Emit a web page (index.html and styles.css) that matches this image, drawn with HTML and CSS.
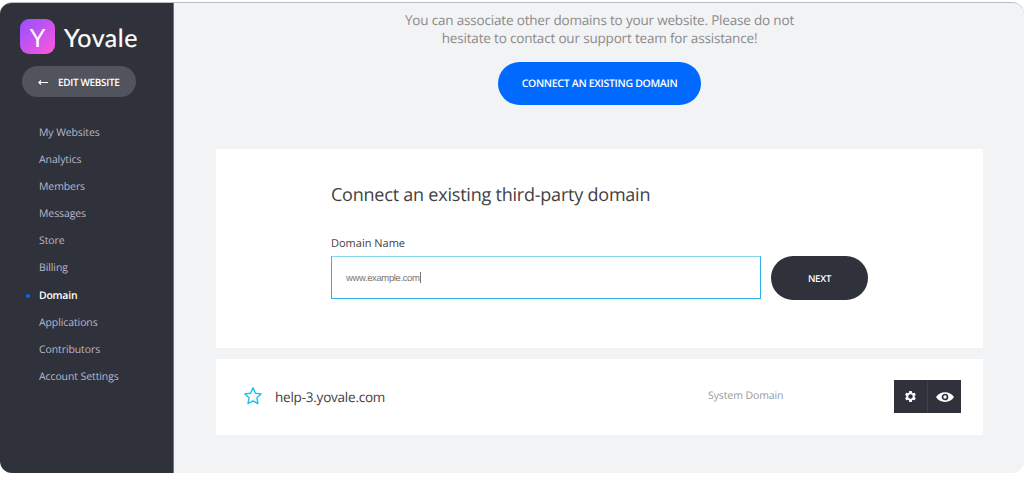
FILE: index.html
```html
<!DOCTYPE html>
<html lang="en">
<head>
<meta charset="utf-8">
<title>Yovale – Domain</title>
<link rel="stylesheet" href="styles.css">
</head>
<body>
<div class="app">
  <aside class="sidebar">
    <div class="brand"><span class="brand-mark">Y</span><span class="brand-name">Yovale</span></div>
    <a class="edit-button"><svg class="arrow" viewBox="0 0 10 8"><path d="M.5 4.500H10M3 2.500 .8 4.500l2.200 2"/></svg><span>EDIT WEBSITE</span></a>
    <nav class="menu">
      <a class="menu-item">My Websites</a>
      <a class="menu-item">Analytics</a>
      <a class="menu-item">Members</a>
      <a class="menu-item">Messages</a>
      <a class="menu-item">Store</a>
      <a class="menu-item">Billing</a>
      <a class="menu-item active">Domain</a>
      <a class="menu-item">Applications</a>
      <a class="menu-item">Contributors</a>
      <a class="menu-item">Account Settings</a>
    </nav>
  </aside>
  <main class="content">
    <p class="intro">You can associate other domains to your website. Please do not<br>hesitate to contact our support team for assistance!</p>
    <a class="connect-button">CONNECT AN EXISTING DOMAIN</a>
    <section class="card form-card">
      <h2 class="title">Connect an existing third-party domain</h2>
      <div class="label">Domain Name</div>
      <div class="form-row">
        <div class="field"><span class="field-text">www.example.com</span><span class="caret"></span></div>
        <a class="next-button">NEXT</a>
      </div>
    </section>
    <section class="card domain-card">
      <svg class="star" viewBox="0 0 20 20"><path d="M10 1.900 12.400 7.200 18.100 7.900 13.900 11.800 15 17.600 10 14.800 5 17.600 6.100 11.800 1.900 7.900 7.600 7.200Z"/></svg>
      <span class="domain">help-3.yovale.com</span>
      <span class="kind">System Domain</span>
      <div class="actions">
        <span class="action"><svg class="gear" viewBox="0 0 24 24"><path fill-rule="evenodd" d="M19.4 13a7.500 7.500 0 0 0 0-2l2.100-1.600a.5.5 0 0 0 .1-.7l-2-3.400a.5.5 0 0 0-.6-.2l-2.500 1a7.300 7.300 0 0 0-1.700-1L14.400 2.400a.5.5 0 0 0-.5-.4h-4a.5.5 0 0 0-.5.400L9 5.100a7.300 7.300 0 0 0-1.700 1l-2.500-1a.5.5 0 0 0-.6.200l-2 3.400a.5.5 0 0 0 .1.700L4.400 11a7.500 7.500 0 0 0 0 2l-2.100 1.600a.5.5 0 0 0-.1.700l2 3.400a.5.5 0 0 0 .6.200l2.500-1a7.300 7.300 0 0 0 1.700 1l.4 2.700a.5.5 0 0 0 .5.400h4a.5.5 0 0 0 .5-.4l.4-2.700a7.300 7.300 0 0 0 1.700-1l2.500 1a.5.5 0 0 0 .6-.2l2-3.400a.5.5 0 0 0-.1-.7ZM12 7.800a4.200 4.200 0 1 1 0 8.400 4.200 4.200 0 0 1 0-8.400Z"/></svg></span>
        <span class="action"><svg class="eye" viewBox="0 0 18 10"><path class="eye-shape" d="M0 5C4-1.500 14-1.500 18 5 14 11.500 4 11.500 0 5Z"/><circle class="eye-ring" cx="9" cy="5" r="2.500"/></svg></span>
      </div>
    </section>
  </main>
</div>
</body>
</html>
```
FILE: styles.css
```css
* { box-sizing: border-box; }
body { margin: 0; height: 480px; overflow: hidden; background: #fff; font-family: "Open Sans", sans-serif; text-rendering: geometricPrecision; }
.app { display: flex; height: 471px; margin-top: 2px; border-radius: 12px; overflow: hidden; border-top: 1px solid #b9bbc0; background: #f2f3f5; }
.sidebar { flex: none; width: 174px; background: #30323b; border-right: 1px solid #74757c; }
.brand { display: flex; align-items: center; height: 35px; margin: 16px 0 0 20px; color: #fff; font-family: Lato, sans-serif; }
.brand-mark { width: 35px; height: 35px; border-radius: 9px; background: linear-gradient(135deg, #944fff, #ff58dc); font-size: 25px; line-height: 38px; text-align: center; }
.brand-name { margin-left: 9px; font-size: 25px; line-height: 35px; letter-spacing: .5px; padding-top: 4px; -webkit-text-stroke: .2px #fff; }
.edit-button { display: flex; align-items: center; width: 114px; height: 31px; margin: 12px 0 0 22px; padding-left: 16px; border-radius: 16px; background: #51535d; color: #fff; font-size: 10px; font-weight: 600; white-space: nowrap; letter-spacing: -.35px; }
.arrow { width: 10px; height: 8px; margin-right: 10px; fill: none; stroke: #fff; stroke-width: 1.100; }
.menu { display: flex; flex-direction: column; margin: 23px 0 0 39px; }
.menu-item { position: relative; height: 27.100px; line-height: 27.100px; color: #b9b8cb; font-size: 10.500px; font-weight: 500; letter-spacing: -.1px; }
.menu-item.active { color: #fff; font-weight: 600; letter-spacing: -.25px; }
.menu-item.active::before { content: ""; position: absolute; left: -13px; top: 11px; width: 4px; height: 4px; border-radius: 50%; background: #006aff; }
.content { flex: 1; display: flex; flex-direction: column; padding: 8px 41px 0 42px; }
.intro { margin: 0; color: #8b8b8b; font-size: 13.500px; line-height: 18px; letter-spacing: -.18px; text-align: center; white-space: nowrap; }
.connect-button { display: flex; align-items: center; justify-content: center; align-self: center; width: 203px; height: 43px; margin-top: 15px; border-radius: 22px; background: #006aff; color: #fff; font-size: 10.500px; font-weight: 600; letter-spacing: -.3px; }
.card { background: #fff; }
.form-card { height: 199px; margin-top: 44px; padding: 33px 115px 0; }
.title { margin: 0; color: #414141; font-size: 18px; font-weight: 400; line-height: 26px; letter-spacing: -.22px; white-space: nowrap; }
.label { margin-top: 28px; color: #414141; font-size: 11px; line-height: 16px; }
.form-row { display: flex; gap: 10px; margin-top: 4px; }
.field { display: flex; align-items: center; width: 430px; height: 43px; padding-left: 14px; border: 1px solid #2fb1ea; border-top-color: #85d3f3; }
.field-text { padding-top: 1px; color: #777; font-family: "Liberation Sans", sans-serif; font-size: 9.500px; letter-spacing: -.38px; }
.caret { width: 1px; height: 11px; background: #777; }
.next-button { display: flex; align-items: center; justify-content: center; width: 97px; height: 44px; border-radius: 22px; background: #30323b; color: #fff; font-size: 9.500px; font-weight: 600; letter-spacing: -.2px; }
.domain-card { display: flex; align-items: center; height: 76px; margin-top: 11px; padding: 0 22px 1px 27px; }
.star { width: 20px; height: 20px; margin-bottom: 1px; fill: none; stroke: #18c1e8; stroke-width: 1.400; stroke-linejoin: round; }
.domain { width: 433px; margin-left: 12px; color: #414141; font-size: 13.500px; letter-spacing: -.22px; }
.kind { color: #999; font-size: 10.500px; letter-spacing: -.1px; padding-bottom: 1px; }
.actions { display: flex; width: 67px; height: 33px; margin-left: auto; background: #30323b; }
.action { display: flex; flex: 1; align-items: center; justify-content: center; }
.action + .action { border-left: 1px solid #3e4049; }
.gear { width: 13px; height: 13px; fill: #fff; }
.eye { width: 18px; height: 10px; }
.eye-shape { fill: #fff; }
.eye-ring { fill: #fff; stroke: #30323b; stroke-width: 1.700; }
```
